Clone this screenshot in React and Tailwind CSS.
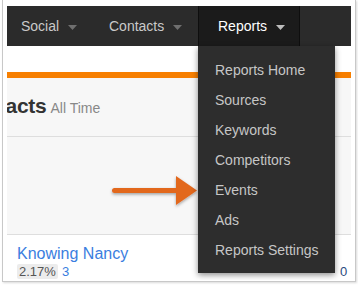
import React from 'react';

const font = { fontFamily: '"Liberation Sans", Arial, sans-serif' };

function Caret({ active }) {
  return (
    <svg width="9" height="5" viewBox="0 0 9 5" className="ml-[9px] mt-[2px]">
      <path d="M0 0 L9 0 L4.5 5 Z" fill={active ? '#bdbdbd' : '#6f6f6f'} />
    </svg>
  );
}

const reports = ['Reports Home', 'Sources', 'Keywords', 'Competitors', 'Events', 'Ads', 'Reports Settings'];

export default function App() {
  return (
    <div className="w-[358px] h-[286px] bg-white overflow-hidden" style={font}>
      <div className="ml-[2px] mr-[2px] h-[282px] border-l border-r border-b border-[#c8c8c8] pl-[4px] pr-[3px] pt-[6px] shadow-[1px_1px_2px_rgba(0,0,0,0.15)]">
        <div className="relative w-[344px] h-[274px] overflow-hidden">
          {/* nav bar */}
          <div className="h-[40px] bg-[#2b2b2b] flex items-stretch text-[14px]">
            <div className="flex items-center pl-[14px] w-[102px] text-[#c9c9c9]">
              Social<Caret />
            </div>
            <div className="flex items-center w-[89px] text-[#c9c9c9]">
              Contacts<Caret />
            </div>
            <div className="flex items-center w-[102px] pl-[19px] bg-[#1b1b1b] border-l border-r border-[#0e0e0e] text-white">
              Reports<Caret active />
            </div>
          </div>

          <div className="h-[26px] bg-white" />
          <div className="h-[6px] bg-[#f77f00]" />

          {/* header */}
          <div className="h-[59px] bg-[#f7f7f7] border-b border-[#dedede] flex items-center overflow-hidden">
            <div className="flex items-baseline -ml-[48px] pb-[2px] whitespace-nowrap">
              <span className="text-[21px] font-bold text-[#333] tracking-[-0.3px]">Contacts</span>
              <span className="ml-[4px] text-[14px] text-[#888]">All Time</span>
            </div>
          </div>

          <div className="h-[98px] bg-[#f7f7f7] border-b border-[#dedede]" />

          {/* list */}
          <div className="bg-white pl-[10px] pt-[9px]">
            <div className="text-[16px] leading-[19px] text-[#3a7ee0]">Knowing Nancy</div>
            <div className="flex items-center mt-[1px] text-[13px] leading-[15px]">
              <span className="bg-[#ececec] text-[#555] px-[2px] rounded-[2px]">2.17%</span>
              <span className="ml-[4px] text-[#3a7ee0]">3</span>
            </div>
          </div>
          <span className="absolute left-[333px] top-[259px] text-[13px] leading-[14px] text-[#2b4a80]">0</span>

          {/* arrow */}
          <svg className="absolute left-[95px] top-[165px]" width="100" height="40" viewBox="0 0 100 40">
            <defs>
              <filter id="sh" x="-20%" y="-40%" width="140%" height="180%">
                <feDropShadow dx="0" dy="1.5" stdDeviation="1.5" floodColor="#000" floodOpacity="0.35" />
              </filter>
            </defs>
            <g filter="url(#sh)">
              <rect x="10" y="17" width="70" height="5" rx="2.5" fill="#e2671e" />
              <path d="M74 5 L95 19.5 L74 34 Z" fill="#e2671e" />
            </g>
          </svg>

          {/* dropdown */}
          <div className="absolute left-[191px] top-[40px] w-[137px] h-[227px] bg-[#2d2d2d] shadow-[0_2px_6px_rgba(0,0,0,0.45)] pt-[9px]">
            {reports.map((r) => (
              <div key={r} className="h-[30px] flex items-center pl-[17px] text-[14px] text-[#c6c6c6]">
                {r}
              </div>
            ))}
          </div>
        </div>
      </div>
    </div>
  );
}
